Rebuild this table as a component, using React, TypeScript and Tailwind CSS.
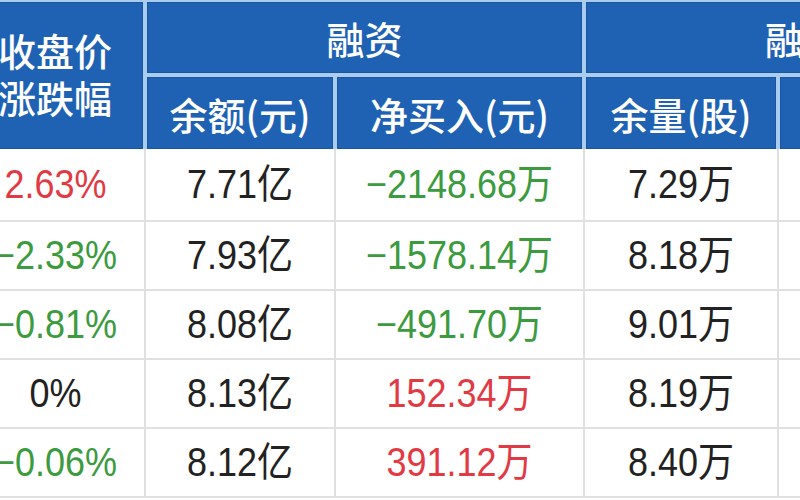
import React from "react";

type Tone = "up" | "down" | "flat";

const rows: { chg: string; chgTone: Tone; bal: string; net: string; netTone: Tone; vol: string }[] = [
  { chg: "2.63%", chgTone: "up", bal: "7.71亿", net: "−2148.68万", netTone: "down", vol: "7.29万" },
  { chg: "−2.33%", chgTone: "down", bal: "7.93亿", net: "−1578.14万", netTone: "down", vol: "8.18万" },
  { chg: "−0.81%", chgTone: "down", bal: "8.08亿", net: "−491.70万", netTone: "down", vol: "9.01万" },
  { chg: "0%", chgTone: "flat", bal: "8.13亿", net: "152.34万", netTone: "up", vol: "8.19万" },
  { chg: "−0.06%", chgTone: "down", bal: "8.12亿", net: "391.12万", netTone: "up", vol: "8.40万" },
];

const toneClass: Record<Tone, string> = {
  up: "text-[#e23a44]",
  down: "text-[#3c9a3f]",
  flat: "text-[#222222]",
};

const cjk = { fontFamily: '"Noto Sans CJK SC", "Noto Sans", sans-serif' };
const num = { fontFamily: '"Liberation Sans", "Noto Sans CJK SC", sans-serif' };

const head = "bg-[#1f62b3] shadow-[inset_0_0_0_1px_#1a559e] flex items-center justify-center";

function Cell({ children, tone = "flat" }: { children?: React.ReactNode; tone?: Tone }) {
  return (
    <div className={`bg-white flex items-center justify-center ${toneClass[tone]}`}>
      <span className="inline-block scale-y-[1.12]">{children}</span>
    </div>
  );
}

export default function App() {
  return (
    <div className="w-[800px] h-[500px] overflow-hidden bg-white">
      <div className="-ml-[33px] w-[1100px]">
        {/* 表头 */}
        <div
          className="grid grid-cols-[176px_186px_245px_190px_240px] grid-rows-[71px_72px] gap-[4px] bg-[#a9cdf0] pt-[2px] text-white text-[38px] font-medium"
          style={cjk}
        >
          <div className={`row-span-2 flex-col gap-[2px] leading-[45px] pb-[6px] ${head}`}>
            <span>收盘价</span>
            <span>涨跌幅</span>
          </div>
          <div className={`col-span-2 ${head}`}>融资</div>
          <div className={`col-span-2 ${head}`}>融券</div>
          <div className={head}>余额(元)</div>
          <div className={head}>净买入(元)</div>
          <div className={head}>余量(股)</div>
          <div className={head}>余额(元)</div>
        </div>

        {/* 数据 */}
        <div
          className="grid grid-cols-[177px_188px_247px_192px_240px] grid-rows-[71px_67px_67px_67px_67px] gap-[2px] bg-[#e0e0e0] pb-[2px] text-[36px]"
          style={num}
        >
          {rows.map((r) => (
            <React.Fragment key={r.bal}>
              <Cell tone={r.chgTone}>{r.chg}</Cell>
              <Cell>{r.bal}</Cell>
              <Cell tone={r.netTone}>{r.net}</Cell>
              <Cell>{r.vol}</Cell>
              <Cell />
            </React.Fragment>
          ))}
        </div>
      </div>
    </div>
  );
}
